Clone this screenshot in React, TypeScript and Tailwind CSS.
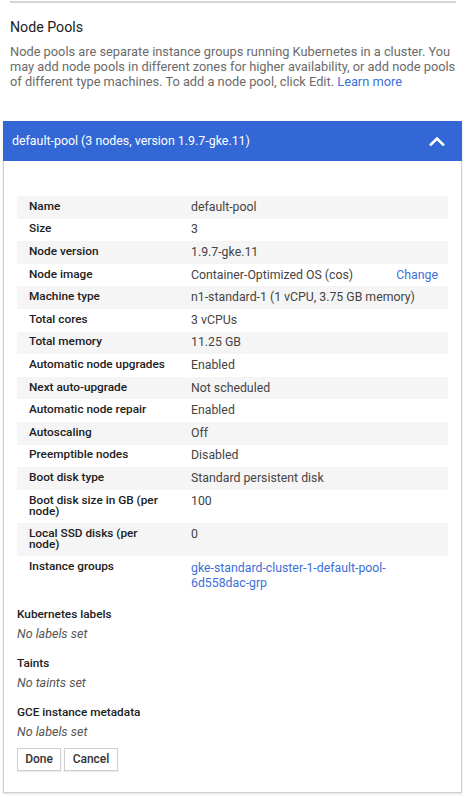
import React from "react";

type Row = {
  label: string;
  value: string;
  link?: boolean;
  action?: string;
};

const rows: Row[] = [
  { label: "Name", value: "default-pool" },
  { label: "Size", value: "3" },
  { label: "Node version", value: "1.9.7-gke.11" },
  { label: "Node image", value: "Container-Optimized OS (cos)", action: "Change" },
  { label: "Machine type", value: "n1-standard-1 (1 vCPU, 3.75 GB memory)" },
  { label: "Total cores", value: "3 vCPUs" },
  { label: "Total memory", value: "11.25 GB" },
  { label: "Automatic node upgrades", value: "Enabled" },
  { label: "Next auto-upgrade", value: "Not scheduled" },
  { label: "Automatic node repair", value: "Enabled" },
  { label: "Autoscaling", value: "Off" },
  { label: "Preemptible nodes", value: "Disabled" },
  { label: "Boot disk type", value: "Standard persistent disk" },
  { label: "Boot disk size in GB (per node)", value: "100" },
  { label: "Local SSD disks (per node)", value: "0" },
  { label: "Instance groups", value: "gke-standard-cluster-1-default-pool-6d558dac-grp", link: true },
];

const extras = [
  { title: "Kubernetes labels", empty: "No labels set" },
  { title: "Taints", empty: "No taints set" },
  { title: "GCE instance metadata", empty: "No labels set" },
];

const ChevronUp = () => (
  <svg width="16" height="10" viewBox="0 0 16 10" fill="none">
    <polyline points="2,8.5 8,2.5 14,8.5" stroke="white" strokeWidth="2.6" strokeLinecap="square" />
  </svg>
);

const DetailRow = ({ row, index }: { row: Row; index: number }) => {
  return (
    <div className={`flex ${index % 2 === 0 ? "bg-[#f5f5f5]" : "bg-white"}`}>
      <div className="w-[174px] shrink-0 pl-[12px] pr-[22px] py-[4.8px] text-[11.8px] leading-[11.7px] font-medium text-[#202020]">
        {row.label}
      </div>
      <div className="flex flex-1 justify-between py-[4.8px] pr-[10px] text-[12.3px] text-[#444]">
        <span className={row.link ? "leading-[15px] text-[#3b6fd8]" : "leading-[13px]"}>{row.value}</span>
        {row.action && <span className="leading-[13px] text-[#3b6fd8]">{row.action}</span>}
      </div>
    </div>
  );
};

const App = () => {
  return (
    <div className="w-[466px] h-[798px] bg-white font-['Roboto',sans-serif]">
      <div className="mx-[10px] h-[2px] bg-[#d4d4d4] translate-y-[1px]" />

      <div className="px-[10px] pt-[15px]">
        <h2 className="text-[14.2px] leading-[20px] text-[#212121]">Node Pools</h2>
        <p className="mt-[7px] text-[12.8px] leading-[15px] text-[#6b6b6b]">
          Node pools are separate instance groups running Kubernetes in a cluster. You may add node pools in
          different zones for higher availability, or add node pools of different type machines. To add a node
          pool, click Edit. <span className="text-[#3b6fd8]">Learn more</span>
        </p>
      </div>

      <div className="mt-[32px] ml-[3px] mr-[4px] border border-[#d0d0d0] shadow-[0_1px_2px_rgba(0,0,0,0.12)]">
        <div className="flex h-[40px] items-center justify-between bg-[#3367d6] pl-[9px] pr-[17px] -mt-px -mx-px">
          <span className="text-[12.4px] text-white">default-pool (3 nodes, version 1.9.7-gke.11)</span>
          <ChevronUp />
        </div>

        <div className="px-[13px] pt-[35px] pb-[21px]">
          <div className="flex flex-col">
            {rows.map((row, i) => (
              <DetailRow key={row.label} row={row} index={i} />
            ))}
          </div>

          <div className="mt-[10px] flex flex-col gap-[11px]">
            {extras.map((x) => (
              <div key={x.title}>
                <div className="text-[11.8px] leading-[19px] font-medium text-[#202020]">{x.title}</div>
                <div className="text-[12.5px] leading-[19px] italic text-[#555]">{x.empty}</div>
              </div>
            ))}
          </div>

          <div className="mt-[6.5px] flex gap-[3px]">
            <button className="h-[23px] w-[44px] border border-[#d0d0d0] bg-white text-[12px] font-medium text-[#333] shadow-[0_1px_1px_rgba(0,0,0,0.08)]">
              Done
            </button>
            <button className="h-[23px] w-[54px] border border-[#d0d0d0] bg-white text-[12px] font-medium text-[#333] shadow-[0_1px_1px_rgba(0,0,0,0.08)]">
              Cancel
            </button>
          </div>
        </div>
      </div>
    </div>
  );
};

export default App;
